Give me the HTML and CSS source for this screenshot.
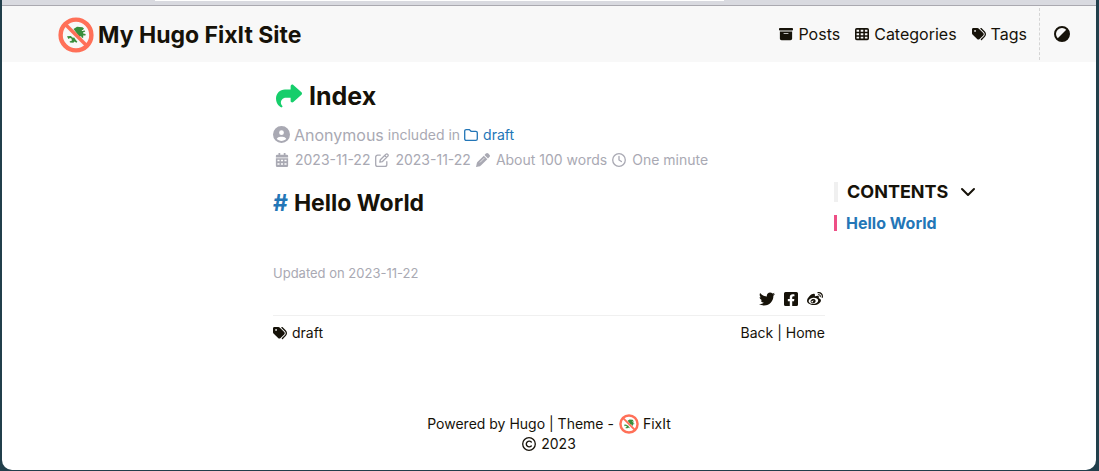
FILE: index.html
```html
<!DOCTYPE html>
<html lang="en">
<head>
<meta charset="utf-8">
<meta name="viewport" content="width=device-width, initial-scale=1">
<title>Index - My Hugo FixIt Site</title>
<link rel="stylesheet" href="styles.css">
</head>
<body>
<svg class="defs" aria-hidden="true">
  <symbol id="logo" viewBox="0 0 36 36">
    <path fill="#388e3c" d="M15.500 12l2-1.200 1.500-1 5.500.4 1.500 1.300-1.200 1.500h-1l.2 1 2.800-.6.400 1.200-2.200 1 .2 1 2.500.4-.3 1.400h-2.300l.2 2.200-1.300.4-1-2-1.500 1zM9 19.200l3.800-.2 2 1.800 1.400-.4 1.600 2.600 1.600 1.800-1 1-2-1.400-1 1.400-3.400-.2-.4-1.200 2.400-.8-.6-2-1.400-.6-1.600 1z"/>
    <circle cx="18" cy="18" r="15.400" fill="none" stroke="#ff7058" stroke-width="4.400"/>
    <path d="M7 7l22 22" stroke="#ff7058" stroke-width="3.600"/>
  </symbol>
  <symbol id="archive" viewBox="0 0 512 512"><path d="M32 32H480c17.700 0 32 14.300 32 32V96c0 17.700-14.300 32-32 32H32C14.300 128 0 113.700 0 96V64C0 46.300 14.300 32 32 32zm0 128H480V416c0 35.300-28.700 64-64 64H96c-35.300 0-64-28.700-64-64V160zm128 80c0 8.800 7.200 16 16 16H336c8.800 0 16-7.200 16-16s-7.200-16-16-16H176c-8.800 0-16 7.200-16 16z"/></symbol>
  <symbol id="cells" viewBox="0 0 16 16"><path fill-rule="evenodd" d="M2 1h12a2 2 0 0 1 2 2v10a2 2 0 0 1-2 2H2a2 2 0 0 1-2-2V3a2 2 0 0 1 2-2zM1.800 3v2.300h2.900V3zm4.700 0v2.300h3V3zm4.800 0v2.300h2.900V3zM1.800 7v2.300h2.900V7zm4.700 0v2.300h3V7zm4.800 0v2.300h2.900V7zM1.800 11v2.200h2.900V11zm4.700 0v2.200h3V11zm4.800 0v2.200h2.900V11z"/></symbol>
  <symbol id="tags" viewBox="0 0 512 512"><path d="M345 39.100L472.800 168.400c52.400 53 52.400 138.200 0 191.200L360.800 472.900c-9.300 9.400-24.500 9.500-33.900 .2s-9.500-24.500-.2-33.900L438.600 325.900c33.900-34.300 33.900-89.400 0-123.700L310.900 72.900c-9.300-9.400-9.200-24.600 .2-33.900s24.600-9.200 33.900 .2zM0 229.500V80C0 53.500 21.500 32 48 32H197.500c17 0 33.300 6.700 45.300 18.700l168 168c25 25 25 65.500 0 90.500L277.300 442.700c-25 25-65.500 25-90.500 0l-168-168C6.700 262.700 0 246.500 0 229.500zM144 144a32 32 0 1 0 -64 0 32 32 0 1 0 64 0z"/></symbol>
  <symbol id="theme" viewBox="0 0 16 16"><circle cx="8" cy="8" r="7" fill="none" stroke="currentColor" stroke-width="2"/><path d="M13 3A7.070 7.070 0 0 1 3 13z"/></symbol>
  <symbol id="share" viewBox="0 0 512 512"><path d="M307 34.800c-11.500 5.100-19 16.600-19 29.200v64H176C78.800 128 0 206.800 0 304C0 417.300 81.500 467.900 100.200 478.100c2.500 1.400 5.300 1.900 8.100 1.900c10.900 0 19.700-8.900 19.700-19.700c0-7.500-4.300-14.400-9.800-19.500C108.800 431.900 96 414.400 96 384c0-53 43-96 96-96h96v64c0 12.600 7.400 24.100 19 29.200s25 3 34.400-5.400l160-144c6.700-6.100 10.600-14.700 10.600-23.800s-3.800-17.700-10.600-23.800l-160-144c-9.400-8.500-22.900-10.600-34.400-5.400z"/></symbol>
  <symbol id="user" viewBox="0 0 512 512"><path fill-rule="evenodd" d="M399 384.200C376.900 345.800 335.400 320 288 320H224c-47.400 0-88.900 25.800-111 64.200c35.200 39.200 86.200 63.800 143 63.800s107.800-24.700 143-63.800zM0 256a256 256 0 1 1 512 0A256 256 0 1 1 0 256zm256 16a72 72 0 1 0 0-144 72 72 0 1 0 0 144z"/></symbol>
  <symbol id="folder" viewBox="0 0 16 16"><path d="M2.500 1.800h3.600l2 2h5.400a1.700 1.700 0 0 1 1.700 1.700v7a1.700 1.700 0 0 1-1.700 1.700h-11a1.700 1.700 0 0 1-1.700-1.700v-9a1.700 1.700 0 0 1 1.700-1.700z" fill="none" stroke="currentColor" stroke-width="1.500"/></symbol>
  <symbol id="calendar" viewBox="0 0 14 16"><path fill-rule="evenodd" d="M3 0h2v2h4V0h2v2h1.500A1.500 1.500 0 0 1 14 3.500V5H0V3.500A1.500 1.500 0 0 1 1.500 2H3zM0 6h14v8.500a1.500 1.500 0 0 1-1.500 1.500h-11A1.500 1.500 0 0 1 0 14.500zm1.800 1.800v1.600h2.400V7.800zm4 0v1.600h2.400V7.800zm4 0v1.600h2.400V7.800zm-8 3.800v1.800h2.400v-1.800zm4 0v1.800h2.400v-1.800zm4 0v1.800h2.400v-1.800z"/></symbol>
  <symbol id="edit" viewBox="0 0 16 16"><path d="M6 2.500H3A2.200 2.200 0 0 0 .8 4.700v8.300A2.200 2.200 0 0 0 3 15.200h8.300a2.200 2.200 0 0 0 2.200-2.200v-3M5.500 10.500l.6-2.800 6.400-6.300a1.300 1.300 0 0 1 1.900 0l.3.300a1.300 1.300 0 0 1 0 1.900L8.300 9.900zM11 3l2.200 2.200" fill="none" stroke="currentColor" stroke-width="1.500" stroke-linecap="round" stroke-linejoin="round"/></symbol>
  <symbol id="pencil" viewBox="0 0 16 16"><path d="M11.300.7a2 2 0 0 1 2.800 0l1.200 1.200a2 2 0 0 1 0 2.800l-1.600 1.600-4-4zM8.900 3.100l4 4-7.300 7.300c-.3.300-.7.500-1 .6L0 16l1-4.600c.1-.4.300-.7.600-1z"/><path d="M4.500 10.800l5-5" stroke="#fff" stroke-width=".8"/></symbol>
  <symbol id="clock" viewBox="0 0 16 16"><path d="M8 .8a7.200 7.200 0 1 0 0 14.400A7.200 7.200 0 0 0 8 .8zM8 4v4l2.700 1.800" fill="none" stroke="currentColor" stroke-width="1.500" stroke-linecap="round"/></symbol>
  <symbol id="chevron" viewBox="0 0 16 16"><path d="M2 5l6 6 6-6" fill="none" stroke="currentColor" stroke-width="2" stroke-linecap="round" stroke-linejoin="round"/></symbol>
  <symbol id="twitter" viewBox="0 0 512 512"><path d="M459.370 151.716c.325 4.548.325 9.097.325 13.645 0 138.720-105.583 298.558-298.558 298.558-59.452 0-114.680-17.219-161.137-47.106 8.447.974 16.568 1.299 25.340 1.299 49.055 0 94.213-16.568 130.274-44.832-46.132-.975-84.792-31.188-98.112-72.772 6.498.974 12.995 1.624 19.818 1.624 9.421 0 18.843-1.300 27.614-3.573-48.081-9.747-84.143-51.980-84.143-102.985v-1.299c13.969 7.797 30.214 12.670 47.431 13.319-28.264-18.843-46.781-51.005-46.781-87.391 0-19.492 5.197-37.360 14.294-52.954 51.655 63.675 129.300 105.258 216.365 109.807-1.624-7.797-2.599-15.918-2.599-24.040 0-57.828 46.782-104.934 104.934-104.934 30.213 0 57.502 12.670 76.670 33.137 23.715-4.548 46.456-13.320 66.599-25.340-7.798 24.366-24.366 44.833-46.132 57.827 21.117-2.273 41.584-8.122 60.426-16.243-14.292 20.791-32.161 39.308-52.628 54.253z"/></symbol>
  <symbol id="facebook" viewBox="0 0 448 512"><path d="M400 32H48A48 48 0 0 0 0 80v352a48 48 0 0 0 48 48h137.250V327.690h-63V256h63v-54.640c0-62.150 37-96.480 93.670-96.480 27.140 0 55.520 4.840 55.520 4.840v61h-31.270c-30.810 0-40.420 19.120-40.420 38.730V256h68.780l-11 71.690h-57.780V480H400a48 48 0 0 0 48-48V80a48 48 0 0 0-48-48z"/></symbol>
  <symbol id="weibo" viewBox="0 0 512 512"><path d="M407 177.600c7.600-24-13.400-46.800-37.400-41.700-22 4.800-28.800-28.100-7.100-32.800 50.100-10.900 92.300 37.100 76.500 84.800-6.800 21.200-38.800 10.800-32-10.300zM214.800 446.700C108.500 446.700 0 395.300 0 310.400c0-44.300 28-95.400 76.300-143.700C176 67 279.500 65.800 249.900 161c-4 13.100 12.300 5.700 12.300 6 79.500-33.600 140.500-16.800 114 51.400-3.700 9.400 1.100 10.900 8.300 13.100 135.700 42.300 34.800 215.200-169.700 215.200zm143.700-146.300c-5.400-55.700-78.500-94-163.400-85.700-84.800 8.600-148.800 60.300-143.400 116s78.500 94 163.400 85.700c84.800-8.600 148.800-60.300 143.400-116zM347.900 35.100c-25.900 5.600-16.800 43.700 8.300 38.300 72.300-15.200 134.800 52.800 111.700 124-7.400 24.200 29.100 37 37.400 12 31.900-99.800-55.100-195.900-157.400-174.300zm-78.500 311c-17.100 38.800-66.800 60-109.100 46.300-40.800-13.100-58-53.400-40.300-89.700 17.700-35.400 63.100-55.400 103.400-45.100 42 10.800 63.100 50.200 46 88.500zm-86.300-30c-12.900-5.400-30 .3-38 12.900-8.300 12.900-4.300 28 8.600 34 13.100 6 30.800.3 39.100-12.900 8-13.100 3.700-28.300-9.700-34zm32.600-13.400c-5.100-1.700-11.400.6-14.300 5.400-2.900 5.100-1.400 10.600 3.700 12.900 5.100 2 11.700-.3 14.600-5.400 2.800-5.200 1.100-10.900-4-12.900z"/></symbol>
  <symbol id="copyright" viewBox="0 0 16 16"><circle cx="8" cy="8" r="7.200" fill="none" stroke="currentColor" stroke-width="1.500"/><path d="M10.600 10.300a3.300 3.300 0 1 1 0-4.600" fill="none" stroke="currentColor" stroke-width="1.600" stroke-linecap="round"/></symbol>
</svg>
<div class="window">
  <div class="chrome"><div class="address"></div></div>
  <header class="header">
    <a class="brand" href="#"><svg class="brand-logo" aria-hidden="true"><use href="#logo"/></svg>My Hugo FixIt Site</a>
    <nav class="menu">
      <a href="#"><svg class="icon" aria-hidden="true"><use href="#archive"/></svg>Posts</a>
      <a href="#"><svg class="icon" aria-hidden="true"><use href="#cells"/></svg>Categories</a>
      <a href="#"><svg class="icon" aria-hidden="true"><use href="#tags"/></svg>Tags</a>
      <button class="theme" type="button" aria-label="Switch theme"><svg class="icon-theme" aria-hidden="true"><use href="#theme"/></svg></button>
    </nav>
  </header>
  <div class="page">
    <main class="article">
      <h1 class="title"><svg class="icon-share" aria-hidden="true"><use href="#share"/></svg>Index</h1>
      <div class="meta">
        <a class="author" href="#"><svg class="icon-user" aria-hidden="true"><use href="#user"/></svg>Anonymous</a>
        <span>included in</span>
        <a class="item link" href="#"><svg class="icon" aria-hidden="true"><use href="#folder"/></svg>draft</a>
      </div>
      <div class="meta details">
        <span class="item"><svg class="icon" aria-hidden="true"><use href="#calendar"/></svg>2023-11-22</span>
        <span class="item"><svg class="icon" aria-hidden="true"><use href="#edit"/></svg>2023-11-22</span>
        <span class="item"><svg class="icon" aria-hidden="true"><use href="#pencil"/></svg>About 100 words</span>
        <span class="item"><svg class="icon" aria-hidden="true"><use href="#clock"/></svg>One minute</span>
      </div>
      <h2 class="heading" id="hello"><a class="link" href="#hello">#</a>Hello World</h2>
      <p class="updated">Updated on 2023-11-22</p>
      <div class="shares">
        <a href="#" aria-label="Twitter"><svg class="icon-social" aria-hidden="true"><use href="#twitter"/></svg></a>
        <a href="#" aria-label="Facebook"><svg class="icon-social" aria-hidden="true"><use href="#facebook"/></svg></a>
        <a href="#" aria-label="Weibo"><svg class="icon-social" aria-hidden="true"><use href="#weibo"/></svg></a>
      </div>
      <div class="tail">
        <a class="item" href="#"><svg class="icon" aria-hidden="true"><use href="#tags"/></svg>draft</a>
        <span><a href="#">Back</a> | <a href="#">Home</a></span>
      </div>
    </main>
    <aside class="toc">
      <h2 class="toc-title">CONTENTS<svg class="icon-chevron" aria-hidden="true"><use href="#chevron"/></svg></h2>
      <a class="toc-link link" href="#hello">Hello World</a>
    </aside>
  </div>
  <footer class="footer">
    <div class="footer-line">Powered by Hugo | Theme - <a class="theme-link" href="#"><svg class="footer-logo" aria-hidden="true"><use href="#logo"/></svg>FixIt</a></div>
    <div class="footer-line"><svg class="icon" aria-hidden="true"><use href="#copyright"/></svg>2023</div>
  </footer>
</div>
</body>
</html>
```
FILE: styles.css
```css
* { box-sizing: border-box; }
body {
  margin: 0;
  min-height: 100vh;
  display: flex;
  padding: 0 3px 1px 2px;
  background: #213f4b;
  color: #161209;
  font: 14px/20px Inter, "Liberation Sans", sans-serif;
}
a { color: inherit; text-decoration: none; }
h1, h2, p { margin: 0; }
svg { display: block; flex: none; fill: currentColor; }
.defs { position: absolute; width: 0; height: 0; }
.window {
  flex: 1;
  display: flex;
  flex-direction: column;
  background: #fff;
  border-radius: 0 0 10px 10px;
  overflow: hidden;
}
.chrome {
  height: 6px;
  padding: 0 34% 0 14%;
  background: #d9dae0;
  border-bottom: 1px solid #aaa9b0;
}
.address { height: 1px; background: #fff; }
.header {
  display: flex;
  justify-content: space-between;
  height: 56px;
  padding: 2px 26px 0 56px;
  background: #f8f8f8;
}
.brand {
  display: flex;
  align-items: center;
  gap: 4px;
  font-size: 23px;
  font-weight: 700;
}
.brand-logo { width: 36px; height: 36px; }
.menu { display: flex; align-items: stretch; gap: 15px; padding-bottom: 2px; font-size: 16px; }
.menu a { display: flex; align-items: center; gap: 5px; }
.icon { width: 14px; height: 14px; }
.theme {
  display: flex;
  align-items: center;
  margin-left: -3px;
  padding: 0 0 0 14px;
  border: 0;
  border-left: 1px dashed #d4d4d4;
  background: none;
  color: inherit;
}
.icon-theme { width: 16px; height: 16px; }
.page {
  display: grid;
  grid-template-columns: 1fr minmax(auto, 552px) 1fr;
}
.article { grid-column: 2; padding-top: 18px; }
.title {
  display: flex;
  align-items: center;
  gap: 7px;
  padding-left: 3px;
  margin-bottom: 10px;
  font-size: 25px;
  line-height: 32px;
}
.icon-share { width: 26px; height: 26px; color: #16ce6b; }
.meta {
  display: flex;
  align-items: center;
  gap: 4px;
  height: 25px;
  color: #a9a9b3;
}
.author { display: flex; align-items: center; gap: 4px; font-size: 16px; }
.icon-user { width: 17px; height: 17px; }
.item { display: flex; align-items: center; gap: 5px; }
.details { padding-left: 1px; }
.details .icon { margin: 0 1px; }
.link { color: #2376b7; }
.heading {
  display: flex;
  gap: 6px;
  margin-top: 15px;
  font-size: 23px;
  line-height: 32px;
}
.updated { margin-top: 44px; font-size: 13px; color: #a9a9b3; }
.shares {
  display: flex;
  justify-content: flex-end;
  gap: 8px;
  padding: 8px 2px 8px 0;
  border-bottom: 1px solid #f0f0f0;
}
.icon-social { width: 16px; height: 16px; }
.tail { display: flex; justify-content: space-between; padding-top: 7px; }
.toc { grid-column: 3; padding: 120px 0 0 9px; }
.toc-title {
  display: flex;
  align-items: center;
  gap: 12px;
  padding-left: 9px;
  border-left: 4px solid #f0f0f0;
  font-size: 18px;
  line-height: 20px;
}
.icon-chevron { width: 16px; height: 16px; }
.toc-link {
  display: block;
  margin-top: 13px;
  padding-left: 9px;
  border-left: 3px solid #ee4f86;
  font-size: 16px;
  font-weight: 700;
  line-height: 16px;
}
.footer { margin-top: auto; padding-bottom: 16px; }
.footer-line { display: flex; align-items: center; justify-content: center; gap: 5px; }
.theme-link { display: flex; align-items: center; gap: 4px; }
.footer-logo { width: 20px; height: 20px; }
```
